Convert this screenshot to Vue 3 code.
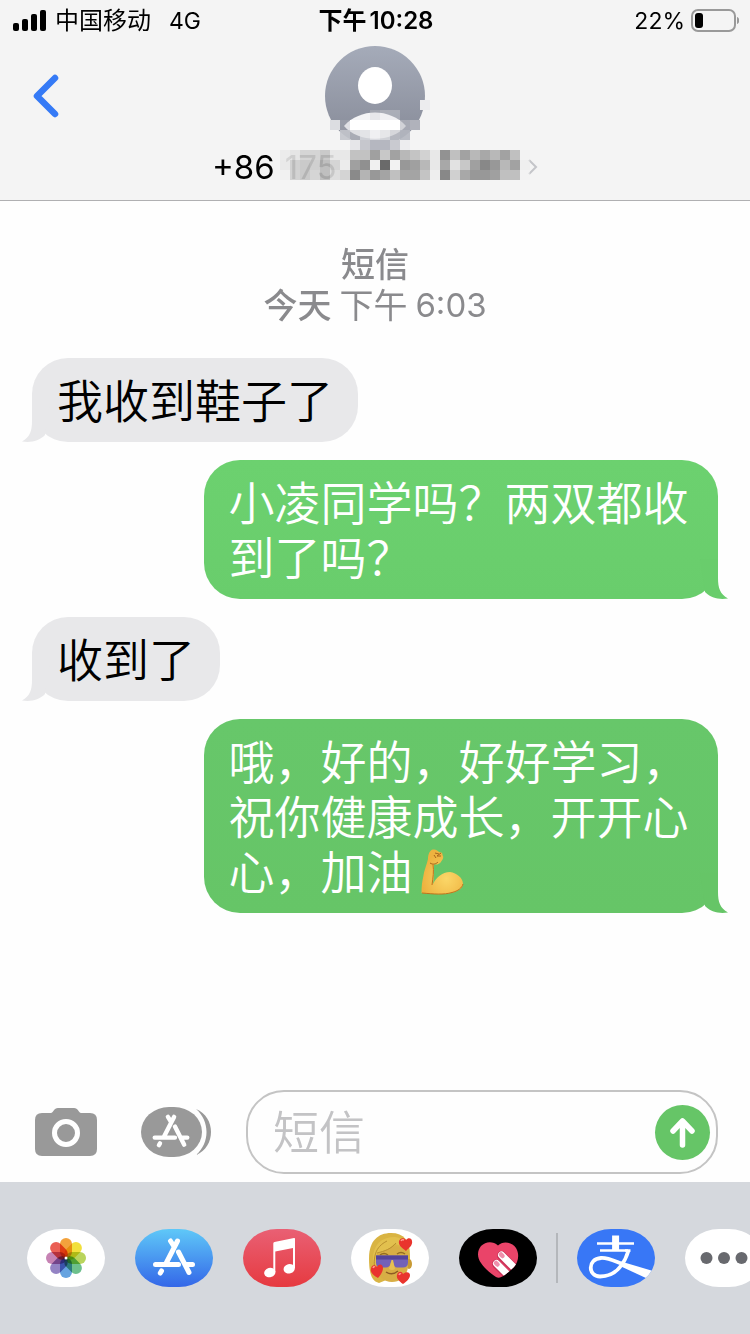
<script setup>

import { ref } from 'vue'

const draft = ref('')

const messages = [
  { id: 1, side: 'in', text: '我收到鞋子了' },
  { id: 2, side: 'out', text: '小凌同学吗？两双都收到了吗？' },
  { id: 3, side: 'in', text: '收到了' },
  { id: 4, side: 'out', text: '哦，好的，好好学习，祝你健康成长，开开心心，加油', arm: true, late: true },
]

const petals = ['#f3a23c', '#f2e03c', '#b9d45c', '#6dc08c', '#66a3e0', '#9483c4', '#c683b4', '#ea5f55']

const glyphA = 'M42.5 12 31 34.5M35.500 12l3.500 5.500M26.500 42l-1.200 2M43.500 23 54 43.500M20.500 35.500h23M51 35.500h6.500'

// privacy mosaic over the number, one value per 10px cell
const rows = [
  { y: 11, x: 8, cells: 'e8 de c8 c8 b8 e2 e8 c2 c2 a0 c8 a2 b8 c4 d2 e8 92 c0 a2 b8 a8 b8 a2 c0 f2' },
  { y: 12, x: 8, cells: 'e4 c2 b8 c0 a8 c8 ec a0 90 f0 6a f2 98 a0 b8 e8 a8 e2 c8 a0 88 98 b8 a2 e8' },
  { y: 13, x: 8, cells: 'f0 c4 b8 c8 a8 d4 d4 8a b4 98 a4 c0 a4 a4 c4 ee 88 d0 a8 98 98 a0 c0 c0 f2' },
]
const mosaic = rows.flatMap(row => row.cells.split(' ').map((c, i) => ({
  x: row.x + i, y: row.y, fill: `#${c}${c}${c}`,
})))

// the same over the avatar's lower edge: x, y, width, fill, opacity
const patches = [
  [22, 6, 1, '#ececee', 1], [17, 7, 1, '#c9cad0', .3], [18, 7, 2, '#e8e8ec', .3],
  [13, 8, 1, '#dcdde1', 1], [14, 8, 1, '#b2b4be', .3], [15, 8, 5, '#ffffff', 1], [20, 8, 1, '#b9bbc3', .6], [21, 8, 1, '#b0b2bb', 1],
  [14, 9, 1, '#c3c5cc', .9], [15, 9, 1, '#c9cad0', .5], [16, 9, 1, '#dfe0e4', .8], [17, 9, 1, '#efeff1', .8], [18, 9, 1, '#e2e3e6', .8], [19, 9, 1, '#c9cad0', .7], [20, 9, 1, '#b4b7c0', .9],
  [15, 10, 1, '#e6e6e9', 1], [16, 10, 1, '#c6c7cd', 1], [17, 10, 2, '#b5b7c0', 1], [19, 10, 1, '#c9cad0', 1], [20, 10, 1, '#ededef', 1],
]

</script>

<template>
<div class="phone">
  <header class="top">
    <div class="status">
      <div class="carrier">
        <svg width="34" height="22" viewBox="0 0 34 22">
          <rect x="0" y="13" width="6" height="8" rx="2" />
          <rect x="9" y="9" width="6" height="12" rx="2" />
          <rect x="18" y="4" width="6" height="17" rx="2" />
          <rect x="27" y="0" width="6" height="21" rx="2" />
        </svg>
        <span>中国移动</span>
        <span class="net">4G</span>
      </div>
      <div class="clock"><span>下午</span><span>10:28</span></div>
      <div class="power">
        <span>22%</span>
        <svg width="48" height="24" viewBox="0 0 48 24">
          <rect x="1" y="1" width="43" height="21" rx="6" fill="none" stroke="#999" stroke-width="2" />
          <rect x="4" y="4" width="8" height="15" rx="3" />
          <path d="M46 8c3 1 3 6 0 7z" fill="#999" />
        </svg>
      </div>
    </div>
    <div class="nav">
      <button class="back" aria-label="返回">
        <svg width="28" height="44" viewBox="0 0 28 44">
          <path d="M23 4 5 22l18 18" fill="none" stroke="#357af6" stroke-width="6.500" stroke-linecap="round" stroke-linejoin="round" />
        </svg>
      </button>
      <button class="contact">
        <svg class="avatar" width="100" height="100" viewBox="0 0 100 100">
          <defs>
            <linearGradient id="av" x1="0" y1="0" x2="0" y2="1">
              <stop offset="0" stop-color="#a5abb9" />
              <stop offset="1" stop-color="#868a97" />
            </linearGradient>
          </defs>
          <circle cx="50" cy="50" r="50" fill="url(#av)" />
          <ellipse cx="50" cy="39.500" rx="17" ry="18.500" fill="#fff" />
          <path d="M19 80c16-18 46-18 62 0-14 17-48 17-62 0z" fill="#f4f4f6" />
        </svg>
        <span class="number">
          <span>+86</span>
          <span class="faded">175</span>
          <svg class="more" width="10" height="16" viewBox="0 0 10 16">
            <path d="M1 1l7 7-7 7" fill="none" stroke="#c4c5c9" stroke-width="2" />
          </svg>
        </span>
      </button>
      <svg class="mosaic" width="350" height="175" viewBox="0 0 35 17.5" shape-rendering="crispEdges">
        <rect v-for="([x, y, w, fill, opacity], i) in patches" :key="i" :x="x" :y="y" :width="w" height="1" :fill="fill" :opacity="opacity" />
        <rect
          v-for="c in mosaic" :key="`${c.x}-${c.y}`" :x="c.x" :y="c.y" width="1" height="1"
          :fill="c.fill" :opacity="c.x < 14 ? .7 : c.x > 31 ? .4 : 1" />
      </svg>
    </div>
  </header>

  <main class="chat">
    <div class="stamp">
      <strong>短信</strong>
      <span class="when"><b>今天</b><span>下午</span><span class="time">6:03</span></span>
    </div>
    <div v-for="m in messages" :key="m.id" class="bubble" :class="[m.side, { late: m.late }]">
      <svg class="tail" width="28" height="40" viewBox="0 0 28 40">
        <path d="M10 0V19C10 29 8 35 0 39.500C9 41 17 39 23 33L28 0Z" />
      </svg>
      {{ m.text }}<svg v-if="m.arm" class="arm" width="43" height="46" viewBox="0 0 43 46" role="img" aria-label="💪">
        <defs>
          <radialGradient id="skin" cx=".6" cy=".65" r=".6">
            <stop offset="0" stop-color="#fbd768" />
            <stop offset="1" stop-color="#eeb23f" />
          </radialGradient>
        </defs>
        <path d="M.5 44C.5 38 1 33 2 29 3 21 6 15 7 10 7 5 9 1 12 .500 15 0 17 2 18 3 20 3 22 4 21.500 6 23 8 22 10 20.500 12 19 15 16 16 13 15.500 13 22 13 29 12 35 15 29 21 23 29 23 36 24 42 29 42 35 42 40 35 43 30 44 22 46 10 45 .5 44Z" fill="url(#skin)" />
        <path d="M12 15.500C13 22 12 29 11 36M1 44C12 45 23 46 31 43.500 37 42 41 39 42 35" fill="none" stroke="#bd731d" stroke-width="1" />
        <path d="M14 4l4 1M20 4l-4 3 4 0M13 6l2 3M9 14c3 2 6 1 8-1" fill="none" stroke="#a8651b" stroke-width="1" />
      </svg>
    </div>
  </main>

  <form class="compose" @submit.prevent="draft = ''">
    <button type="button" class="camera" aria-label="相机">
      <svg width="62" height="48" viewBox="0 0 62 48">
        <path d="M7 5h9c2 0 3-5 7-5h16c4 0 5 5 7 5h9q7 0 7 7v29q0 7-7 7H7q-7 0-7-7V12q0-7 7-7z" fill="#999" />
        <circle cx="31" cy="25" r="11.500" fill="none" stroke="#fff" stroke-width="5" />
      </svg>
    </button>
    <button type="button" class="apps" aria-label="应用">
      <svg width="70" height="50" viewBox="0 0 70 50">
        <path d="M55 2c20 8 20 38 0 46 14-12 14-34 0-46z" fill="#999" />
        <rect width="61" height="50" rx="28" ry="25" fill="#999" />
        <g transform="translate(30 24) scale(.88) translate(-39 -28)">
          <path :d="glyphA" class="stroke" />
        </g>
      </svg>
    </button>
    <div class="field">
      <input v-model="draft" type="text" placeholder="短信" aria-label="短信">
      <button class="send" aria-label="发送">
        <svg width="55" height="55" viewBox="0 0 55 55">
          <path d="M27.500 17v23M18 26l9.500-10 9.500 10" fill="none" stroke="#fff" stroke-width="5.500" stroke-linecap="round" stroke-linejoin="round" />
        </svg>
      </button>
    </div>
  </form>

  <nav class="drawer">
    <button class="app" aria-label="照片">
      <svg viewBox="0 0 78 58">
        <rect
          v-for="(color, i) in petals" :key="color" class="petal" x="33" y="9" width="12" height="20" rx="6"
          :fill="color" :transform="`rotate(${i * 45} 39 29)`" />
        <circle cx="39" cy="29" r="1.500" fill="#fff" />
      </svg>
    </button>
    <button class="app store" aria-label="App Store">
      <svg viewBox="0 0 78 58"><path :d="glyphA" class="stroke" /></svg>
    </button>
    <button class="app music" aria-label="音乐">
      <svg viewBox="0 0 78 58" fill="#fff">
        <path d="M30.300 14.500q0-1.200 1.200-1.500L51 9q1-.200 1 .800V39h-2V19L32.300 22.500V43h-2z" />
        <ellipse cx="26.800" cy="43.500" rx="5.700" ry="4.700" transform="rotate(-15 27 43.500)" />
        <ellipse cx="46.300" cy="39.800" rx="5.700" ry="4.700" transform="rotate(-15 46 40)" />
      </svg>
    </button>
    <button class="app" aria-label="拟我表情">
      <svg viewBox="0 0 78 58">
        <path d="M18 29C18 12 27 4 40 4c13 0 19 8 19 22v10L50 45 28 54C20 52 18 43 18 29z" fill="#d9b443" />
        <ellipse cx="58" cy="35" rx="3" ry="5" fill="#c89a34" />
        <path d="M26 24c8-8 22-9 31-2v16c-1 9-8 15-16 15-9 0-15-7-15-14z" fill="#d8ae45" />
        <path d="M22 30C22 16 30 8 44 8 52 9 56 14 57 22 51 17 46 15 43 15 38 21 30 23 26 24 24 34 26 44 28 52" fill="#e2c04e" />
        <path d="M26 24c8-2 14-4 19-10M24 42c-2-14 0-24 12-30" fill="none" stroke="#b88f30" stroke-width="1" />
        <path d="M29 26q4-3 8 0M46 25q4-3 8 0" fill="none" stroke="#946d22" stroke-width="1.500" />
        <path d="M25 26.500h32v7q0 5-5 5h-6q-3 0-4-5h-2q-1 5-5 5h-5q-5 0-5-5z" fill="#7361b8" />
        <path d="M25 26.500h32v4H25z" fill="#54439a" />
        <path d="M40.500 31 38 40q3 2 6 0l-2-9z" fill="#e7c052" />
        <path d="M35 43q6 4 12-1" fill="none" stroke="#8d5b24" stroke-width="1.500" />
        <g fill="#e9342d">
          <path d="M55 22c-4-3-8-6-7-10 1-3 5-4 7-1 2-3 6-2 6 1 1 4-3 7-6 10z" />
          <path d="M27 49c-5-3-8-6-7-9 0-4 4-5 6-2 2-4 6-3 6 1 0 3-2 7-5 10z" />
          <path d="M52 55c-4-3-7-6-6-9 1-4 5-4 6-1 3-3 7-2 7 1 0 4-4 7-7 9z" />
        </g>
        <path d="M50 12q1-2 3-1M22 39q1-2 2-1M48 46q1-2 2-1" fill="none" stroke="#ff9a8d" stroke-width="1.500" />
      </svg>
    </button>
    <button class="app health" aria-label="爱心">
      <svg viewBox="0 0 78 58">
        <defs>
          <clipPath id="heart">
            <path d="M39 16.500C44 11.500 53 13 57 19c4 7 2 14-2 19-5 5-10 9-14 10.500q-2 .5-4-.500C30 43 25 39 22 34c-4-6-4-12 0-17 5-5 12-5 17-.500z" />
          </clipPath>
        </defs>
        <g clip-path="url(#heart)">
          <rect width="78" height="58" fill="#ea4469" />
          <path d="M42.500 26.500 59 43M37.500 35 54 51.500" stroke="#a81e45" stroke-width="9" stroke-linecap="round" opacity=".5" />
          <path d="M42.500 26 59 42.500M37.500 34.500 54 51" stroke="#fff" stroke-width="7" stroke-linecap="round" />
          <path d="M42 25.500l1.500 1.500M37 34l1.500 1.500" stroke="#ef8fac" stroke-width="4.500" stroke-linecap="round" />
        </g>
      </svg>
    </button>
    <span class="divider"></span>
    <button class="app pay" aria-label="支付宝">
      <svg viewBox="0 0 78 58">
        <g fill="none" stroke="#fff">
          <path d="M20 14.500h37M23 21.500h28" stroke-width="2.500" />
          <path d="M38.600 6.500v15" stroke-width="7" />
          <path d="M51.500 21.500C48 33 40 47.500 23 47.500 11 47.500 10 30 24 29c8-.5 15 4 24 7" stroke-width="3.800" />
          <path d="M48 21.500h5.500" stroke-width="2.500" />
        </g>
        <path d="M44 32.500l32 9.500q-1.500 4-6 7.500L43 37z" fill="#fff" />
      </svg>
    </button>
    <button class="app" aria-label="更多">
      <svg viewBox="0 0 78 58" fill="#68696e">
        <circle cx="21.500" cy="29" r="6" />
        <circle cx="39" cy="29" r="6" />
        <circle cx="56.500" cy="29" r="6" />
      </svg>
    </button>
  </nav>
</div>
</template>

<style>
body { background: white; }
</style>

<style scoped>
.phone { display: flex; flex-direction: column; min-height: 100vh; overflow: hidden; background: #fefefe; color: black; font-family: Inter, "Noto Sans CJK SC", sans-serif; }
button { display: block; flex: none; margin: 0; padding: 0; border: 0; background: none; color: inherit; font: inherit; }
svg { display: block; }

.top { position: relative; background: #f4f4f4; border-bottom: 1px solid #b0b0b2; }
.status { display: grid; grid-template-columns: 1fr auto 1fr; align-items: center; box-sizing: border-box; height: 40px; padding: 2px 11px 0 13px; font-size: 24px; line-height: 38px; }
.carrier { display: flex; align-items: center; gap: 8px; }
.net { margin-left: 10px; font-size: 23px; }
.clock { display: flex; gap: 3px; font-weight: 600; font-size: 24px; }
.power { display: flex; align-items: center; justify-content: flex-end; gap: 6px; font-size: 23px; }

.nav { display: grid; grid-template-columns: 1fr auto 1fr; align-items: start; height: 160px; }
.back { justify-self: start; padding: 34px 32px; }
.contact { display: flex; flex-direction: column; align-items: center; padding-top: 6px; }
.number { display: flex; align-items: center; gap: 10px; width: 326px; font-size: 33px; line-height: 42px; }
.faded { color: #a8a8a8; }
.more { margin-left: auto; }
.mosaic { position: absolute; top: 40px; left: calc(50% - 175px); pointer-events: none; }

.chat { flex: 1 1 auto; display: flex; flex-direction: column; align-items: flex-start; gap: 18px; padding: 43px 32px 18px; }
.stamp { align-self: center; display: flex; flex-direction: column; align-items: center; margin-bottom: 14px; color: #8a8a8d; font-size: 34px; line-height: 41px; }
.stamp strong, .stamp b { font-weight: 500; }
.when { display: flex; gap: 8px; }
.time { font-size: 33px; }

.bubble { position: relative; box-sizing: border-box; max-width: 75%; padding: 16px 25px 13px; border-radius: 36px; font-size: 46px; line-height: 55px; font-weight: 350; }
.in { background: #e8e8ea; fill: #e8e8ea; }
.out { align-self: flex-end; background: linear-gradient(#6cd16f, #69cd6c); fill: #69cd6c; color: white; }
.out.late { background: linear-gradient(#67c76a, #66c567); fill: #66c567; }
.tail { position: absolute; bottom: 0; left: -10px; }
.out .tail { right: -10px; left: auto; transform: scaleX(-1); }
.arm { display: inline-block; margin-left: 8px; vertical-align: -6px; }

.compose { display: flex; align-items: center; padding: 0 32px 8px 35px; }
.apps { margin: 0 35px 0 44px; }
.field { flex: 1 1 0; display: flex; align-items: center; box-sizing: border-box; min-width: 0; height: 84px; padding: 0 6px 0 25px; border: 2px solid #c4c4c4; border-radius: 38px; }
.field input { flex: 1 1 0; min-width: 0; height: 70px; padding: 0; border: 0; outline: 0; background: none; font: inherit; font-size: 46px; font-weight: 350; }
.field input::placeholder { color: #c3c3c5; opacity: 1; }
.send { border-radius: 50%; background: #66c567; }
.stroke { fill: none; stroke: white; stroke-width: 5; stroke-linecap: round; }

.drawer { display: flex; align-items: center; gap: 30px; padding: 47px 0 47px 27px; overflow: hidden; background: #d5d8dd; }
.app { width: 78px; height: 58px; border-radius: 34px / 29px; overflow: hidden; background: white; }
.petal { mix-blend-mode: multiply; }
.store { background: linear-gradient(#5fc8f8, #3467e8); }
.music { background: linear-gradient(#e96074, #e63a40); }
.health { background: black; }
.pay { background: #3877f6; }
.divider { flex: none; width: 2px; height: 50px; margin: 0 -11px; background: #b4b7bb; }

</style>
